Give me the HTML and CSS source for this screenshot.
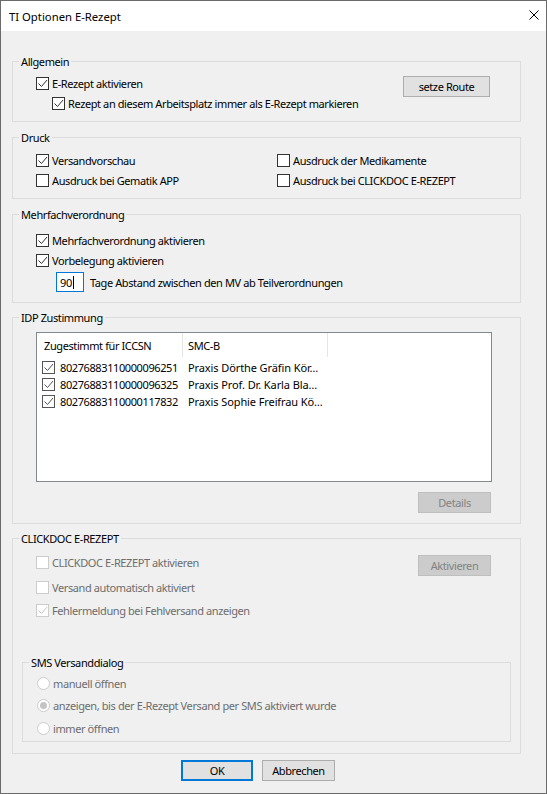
FILE: index.html
```html
<!DOCTYPE html>
<html lang="de">
<head>
<meta charset="UTF-8">
<title>TI Optionen E-Rezept</title>
<link rel="stylesheet" href="styles.css">
</head>
<body>
<div class="dialog">
    <div class="titlebar">
        <span class="title">TI Optionen E-Rezept</span>
        <svg class="close" width="10" height="10" viewBox="0 0 10 10"><path d="M0.5 0.5L9.5 9.5M9.5 0.5L0.5 9.5"/></svg>
    </div>

    <div class="client">
        <fieldset class="group g-allgemein">
            <legend>Allgemein</legend>
            <div class="group-body split">
                <div>
                    <div class="row"><span class="box"><svg viewBox="0 0 11 11"><path d="M1.5 5.5L4.5 8.5L10 2"/></svg></span>E-Rezept aktivieren</div>
                    <div class="row indent"><span class="box"><svg viewBox="0 0 11 11"><path d="M1.5 5.5L4.5 8.5L10 2"/></svg></span>Rezept an diesem Arbeitsplatz immer als E-Rezept markieren</div>
                </div>
                <button class="btn btn-route">setze Route</button>
            </div>
        </fieldset>

        <fieldset class="group g-druck">
            <legend>Druck</legend>
            <div class="group-body cols">
                <div class="row"><span class="box"><svg viewBox="0 0 11 11"><path d="M1.5 5.5L4.5 8.5L10 2"/></svg></span>Versandvorschau</div>
                <div class="row"><span class="box"></span>Ausdruck der Medikamente</div>
                <div class="row"><span class="box"></span>Ausdruck bei Gematik APP</div>
                <div class="row"><span class="box"></span>Ausdruck bei CLICKDOC E-REZEPT</div>
            </div>
        </fieldset>

        <fieldset class="group g-mv">
            <legend>Mehrfachverordnung</legend>
            <div class="group-body">
                <div class="row"><span class="box"><svg viewBox="0 0 11 11"><path d="M1.5 5.5L4.5 8.5L10 2"/></svg></span>Mehrfachverordnung aktivieren</div>
                <div class="row"><span class="box"><svg viewBox="0 0 11 11"><path d="M1.5 5.5L4.5 8.5L10 2"/></svg></span>Vorbelegung aktivieren</div>
                <div class="days">
                    <span class="edit">90<span class="caret"></span></span>
                    <span class="days-label">Tage Abstand zwischen den MV ab Teilverordnungen</span>
                </div>
            </div>
        </fieldset>

        <fieldset class="group g-idp">
            <legend>IDP Zustimmung</legend>
            <div class="group-body stack">
                <div class="list">
                    <div class="list-head">
                        <span class="col col-iccsn">Zugestimmt für ICCSN</span>
                        <span class="col col-smcb">SMC-B</span>
                    </div>
                    <div class="list-row">
                        <span class="col col-iccsn"><span class="box small"><svg viewBox="0 0 11 11"><path d="M1.5 5.5L4.5 8.5L10 2"/></svg></span>80276883110000096251</span>
                        <span class="col col-smcb">Praxis Dörthe Gräfin Kör…</span>
                    </div>
                    <div class="list-row">
                        <span class="col col-iccsn"><span class="box small"><svg viewBox="0 0 11 11"><path d="M1.5 5.5L4.5 8.5L10 2"/></svg></span>80276883110000096325</span>
                        <span class="col col-smcb">Praxis Prof. Dr. Karla Bla…</span>
                    </div>
                    <div class="list-row">
                        <span class="col col-iccsn"><span class="box small"><svg viewBox="0 0 11 11"><path d="M1.5 5.5L4.5 8.5L10 2"/></svg></span>80276883110000117832</span>
                        <span class="col col-smcb">Praxis Sophie Freifrau Kö…</span>
                    </div>
                </div>
                <button class="btn btn-side" disabled>Details</button>
            </div>
        </fieldset>

        <fieldset class="group g-clickdoc">
            <legend>CLICKDOC E-REZEPT</legend>
            <div class="group-body">
                <div class="split">
                    <div class="off">
                        <div class="row"><span class="box"></span>CLICKDOC E-REZEPT aktivieren</div>
                        <div class="row r2"><span class="box"></span>Versand automatisch aktiviert</div>
                        <div class="row r3"><span class="box"><svg viewBox="0 0 11 11"><path d="M1.5 5.5L4.5 8.5L10 2"/></svg></span>Fehlermeldung bei Fehlversand anzeigen</div>
                    </div>
                    <button class="btn btn-side" disabled>Aktivieren</button>
                </div>

                <fieldset class="group sms">
                    <legend>SMS Versanddialog</legend>
                    <div class="sms-body off">
                        <div class="row"><span class="radio"></span>manuell öffnen</div>
                        <div class="row r2"><span class="radio sel"><span class="dot"></span></span>anzeigen, bis der E-Rezept Versand per SMS aktiviert wurde</div>
                        <div class="row r3"><span class="radio"></span>immer öffnen</div>
                    </div>
                </fieldset>
            </div>
        </fieldset>

        <div class="footer">
            <button class="btn btn-ok">OK</button>
            <button class="btn btn-cancel">Abbrechen</button>
        </div>
    </div>
</div>
</body>
</html>
```

FILE: styles.css
```css
* {
    box-sizing: border-box;
}
body {
    margin: 0;
    font-family: "Noto Sans", sans-serif;
    font-size: 11px;
    letter-spacing: -0.4px;
    color: #000;
    background: #f0f0f0;
}
.dialog {
    width: 547px;
    height: 794px;
    border: 1px solid #6b6b6b;
    background: #f0f0f0;
}

/* title bar */
.titlebar {
    height: 30px;
    background: #fff;
    display: flex;
    align-items: center;
    justify-content: space-between;
    padding: 0 7px 0 8px;
}
.title {
    font-size: 11.3px;
    letter-spacing: 0;
}
.close {
    margin-top: -2px;
    stroke: #000;
    stroke-width: 1;
    fill: none;
}

.client {
    padding-left: 11px;
}

/* group frames */
.group {
    width: 509px;
    margin: 8px 0 0 0;
    padding: 0;
    border: 1px solid #dcdcdc;
    min-width: 0;
}
.group legend {
    margin-left: 6px;
    padding: 0 2px;
    line-height: 15px;
    height: 15px;
}
.g-allgemein {
    margin-top: 23px;
}
.g-idp,
.g-clickdoc {
    margin-top: 7px;
}
.group-body {
    padding: 0 28px 0 23px;
}
.g-allgemein .group-body {
    padding-top: 4px;
    padding-bottom: 8px;
}
.g-druck .group-body {
    padding-top: 5px;
    padding-bottom: 8px;
}
.g-mv .group-body {
    padding-top: 8px;
    padding-bottom: 10px;
}
.g-idp .group-body {
    padding-top: 7px;
    padding-bottom: 10px;
}
.g-clickdoc .group-body {
    padding-top: 6px;
    padding-bottom: 11px;
}

.split {
    display: flex;
    justify-content: space-between;
    align-items: flex-start;
}
.cols {
    display: grid;
    grid-template-columns: 241px auto;
}
.stack {
    display: flex;
    flex-direction: column;
    align-items: flex-end;
}

/* checkbox rows */
.row {
    height: 20px;
    display: flex;
    align-items: center;
    white-space: nowrap;
}
.row.indent {
    padding-left: 16px;
}
.box {
    width: 13px;
    height: 13px;
    flex: none;
    border: 1px solid #333;
    background: #fff;
    margin-right: 3px;
}
.box svg {
    display: block;
    width: 11px;
    height: 11px;
    fill: none;
    stroke: #333;
    stroke-width: 1;
}
.off {
    color: #6d6d6d;
}
.off .box,
.off .radio {
    border-color: #cccccc;
}
.off .box svg {
    stroke: #c4c4c4;
}
.off .r2 {
    margin-top: 5px;
}
.off .r3 {
    margin-top: 3px;
}

/* days input */
.days {
    display: flex;
    align-items: center;
    margin-top: 2px;
    padding-left: 20px;
}
.edit {
    width: 28px;
    height: 20px;
    border: 1px solid #0078d7;
    background: #fff;
    display: flex;
    align-items: center;
    padding-left: 3px;
}
.caret {
    width: 1px;
    height: 13px;
    background: #000;
    margin-left: 1px;
}
.days-label {
    margin-left: 6px;
}

/* list view */
.list {
    width: 456px;
    height: 150px;
    border: 1px solid #828790;
    background: #fff;
    align-self: flex-start;
}
.list-head {
    display: flex;
    height: 24px;
}
.list-head .col {
    border-right: 1px solid #e5e5e5;
    display: flex;
    align-items: center;
}
.col {
    white-space: nowrap;
    overflow: hidden;
}
.col-iccsn {
    width: 146px;
    padding-left: 7px;
}
.col-smcb {
    width: 145px;
    padding-left: 5px;
}
.list-row .col-smcb {
    letter-spacing: -0.1px;
}
.list-row {
    display: flex;
    height: 17px;
    align-items: center;
}
.list-head + .list-row {
    margin-top: 2px;
}
.list-row .col {
    display: flex;
    align-items: center;
}
.list-row .col-iccsn {
    padding-left: 5px;
}
.box.small {
    border-color: #555;
    margin-right: 5px;
}
.box.small svg {
    stroke: #555;
}

/* radios */
.sms {
    width: 489px;
    margin: 35px 0 0 -14px;
}
.sms-body {
    padding: 3px 0 3px 14px;
}
.sms-body .r2 {
    margin-top: 2px;
}
.sms-body .r3 {
    margin-top: 3px;
}
.radio {
    width: 13px;
    height: 13px;
    flex: none;
    border: 1px solid #333;
    border-radius: 50%;
    background: #fff;
    margin-right: 3px;
    display: flex;
    align-items: center;
    justify-content: center;
}
.radio .dot {
    width: 7px;
    height: 7px;
    border-radius: 50%;
    background: #c4c4c4;
}

/* buttons */
.btn {
    height: 21px;
    padding: 0;
    border: 1px solid #adadad;
    background: #e1e1e1;
    font-family: inherit;
    font-size: 11px;
    letter-spacing: inherit;
    color: #000;
}
.btn:disabled {
    background: #cccccc;
    border-color: #bfbfbf;
    color: #838383;
}
.btn-route {
    width: 87px;
    margin: 3px 2px 0 0;
}
.btn-side {
    width: 73px;
    margin: 3px 1px 0 0;
}
.g-idp .btn-side {
    margin-top: 10px;
}
.footer {
    display: flex;
    gap: 9px;
    margin-top: 6px;
    padding-left: 169px;
}
.btn-ok {
    width: 72px;
    border: 2px solid #0078d7;
}
.btn-cancel {
    width: 73px;
}
```
